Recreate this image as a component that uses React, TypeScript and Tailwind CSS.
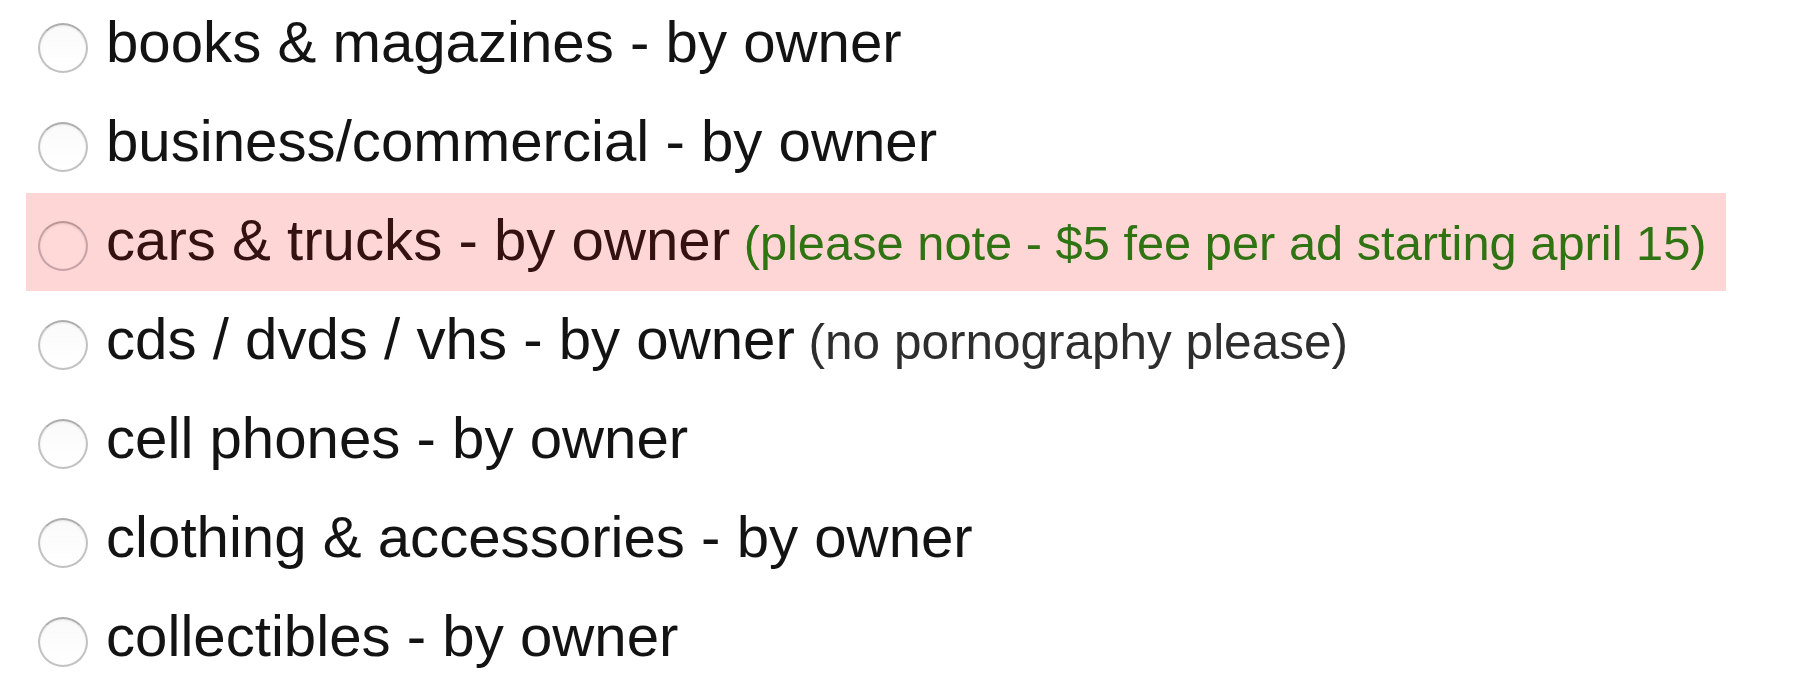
import React from "react";

type Row = { label: string; note?: string; noteKind?: "green" | "gray"; highlight?: boolean };

const rows: Row[] = [
  { label: "books & magazines - by owner" },
  { label: "business/commercial - by owner" },
  { label: "cars & trucks - by owner", note: "(please note - $5 fee per ad starting april 15)", noteKind: "green", highlight: true },
  { label: "cds / dvds / vhs - by owner", note: "(no pornography please)", noteKind: "gray" },
  { label: "cell phones - by owner" },
  { label: "clothing & accessories - by owner" },
  { label: "collectibles - by owner" },
];

function Radio({ pink }: { pink?: boolean }) {
  return (
    <span
      className={
        pink
          ? "shrink-0 w-[50px] h-[50px] rounded-full border-[2.5px] border-[#c6a3a6] border-t-[#b99598] bg-[#ffd8d8] shadow-[inset_0_1px_2px_rgba(120,60,60,0.15)]"
          : "shrink-0 w-[50px] h-[50px] rounded-full border-[2.5px] border-[#c2c2c2] border-t-[#adadad] bg-gradient-to-b from-[#fafafa] to-white shadow-[inset_0_1px_2px_rgba(0,0,0,0.08)]"
      }
    />
  );
}

export default function App() {
  return (
    <div
      className="w-[1800px] h-[700px] bg-white overflow-hidden"
      style={{ fontFamily: '"Liberation Sans", Arial, Helvetica, sans-serif' }}
    >
      <div className="flex flex-col mt-[-2px] pl-[26px]">
        {rows.map((r, i) =>
          r.highlight ? (
            <div
              key={i}
              className="flex items-center w-[1700px] h-[98px] mt-[-3px] mb-[4px] pt-[7px] pl-[12px] bg-[#ffd6d6]"
            >
              <Radio pink />
              <span className="ml-[18px] mb-[10px] whitespace-nowrap text-[58.2px] leading-none text-[#351212]">
                {r.label}
                <span className="text-[48.8px] text-[#2f7312]"> {r.note}</span>
              </span>
            </div>
          ) : (
            <div key={i} className="flex items-center h-[99px] pl-[12px]">
              <Radio />
              <span className="ml-[18px] mb-[10px] whitespace-nowrap text-[58.2px] leading-none text-[#131313]">
                {r.label}
                {r.note && (
                  <span className="text-[49.5px] text-[#2e2e2e]"> {r.note}</span>
                )}
              </span>
            </div>
          )
        )}
      </div>
    </div>
  );
}
